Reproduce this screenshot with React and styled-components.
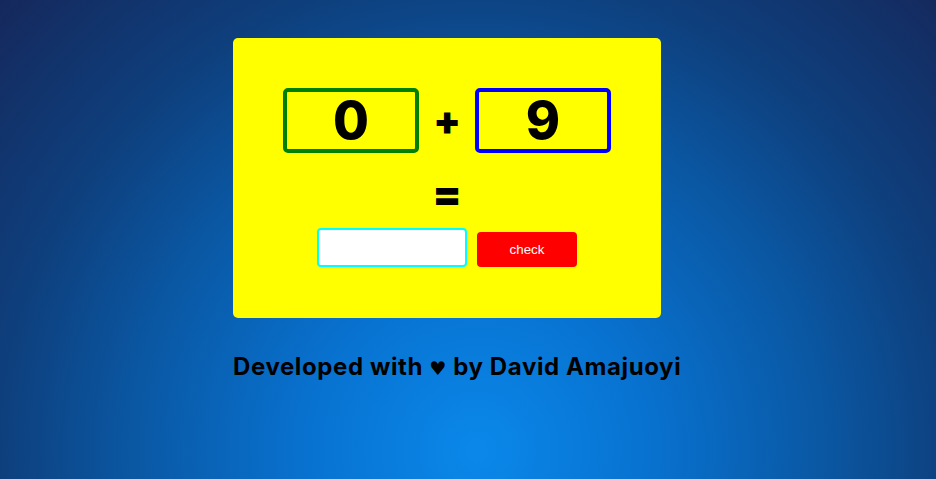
import React, { useState } from 'react'
import styled, { createGlobalStyle } from 'styled-components'

const GlobalStyle = createGlobalStyle`
    html, body {
        margin: 0;
        padding: 0;
        height: 100%;
    }
    body {
        min-height: 479px;
        font-family: 'Inter', 'Liberation Sans', sans-serif;
        background: radial-gradient(circle farthest-corner at 51% 94%, #0a88ea 0%, #0872d0 26%, #0a58a4 52%, #0e407e 72%, #15285c 100%);
        background-attachment: fixed;
    }
`

const Page = styled.div`
    width: 470px;
    margin: 0 auto;
    padding-top: 38px;
`

const Card = styled.div`
    width: 428px;
    box-sizing: border-box;
    background: #ffff00;
    border-radius: 5px;
    padding: 50px 0 51px;
    display: flex;
    flex-direction: column;
    align-items: center;
`

const Sum = styled.div`
    display: flex;
    align-items: center;
    gap: 18px;
`

const NumberBox = styled.div`
    width: 136px;
    height: 65px;
    box-sizing: border-box;
    border: 4px solid ${props => props.color};
    border-radius: 5px;
    display: flex;
    align-items: center;
    justify-content: center;
    font-family: 'Inter', 'Liberation Sans', sans-serif;
    font-weight: 800;
    font-size: 52px;
    line-height: 1;
    color: #000;
`

const Sign = styled.span`
    width: 20px;
    display: flex;
    justify-content: center;
    font-family: 'Inter', 'Liberation Sans', sans-serif;
    font-weight: 900;
    font-size: 40px;
    line-height: 1;
    color: #000;
`

const Equals = styled(Sign)`
    margin-top: 20px;
    font-size: 42px;
`

const AnswerRow = styled.div`
    display: flex;
    align-items: flex-end;
    gap: 10px;
    margin-top: 13px;
`

const AnswerInput = styled.input`
    width: 150px;
    height: 39px;
    box-sizing: border-box;
    border: 2px solid #00ffff;
    border-radius: 4px;
    background: #fff;
    outline: none;
    padding: 0 8px;
    font-size: 16px;
`

const CheckButton = styled.button`
    width: 100px;
    height: 35px;
    border: none;
    border-radius: 4px;
    background: #ff0000;
    color: #fff;
    font-family: 'Liberation Sans', Arial, sans-serif;
    font-size: 13.33px;
    cursor: pointer;
`

const Footer = styled.h2`
    margin: 34px 0 0;
    font-family: 'Inter', 'Liberation Sans', sans-serif;
    font-weight: 700;
    font-size: 24px;
    letter-spacing: 0.6px;
    color: #000;
    white-space: nowrap;
`

const Heart = styled.span`
    font-family: 'DejaVu Sans', sans-serif;
    font-size: 19px;
`

const App = () => {
    const [answer, setAnswer] = useState('')

    return (
        <>
            <GlobalStyle />
            <Page>
                <Card>
                    <Sum>
                        <NumberBox color="#008000">0</NumberBox>
                        <Sign>+</Sign>
                        <NumberBox color="#0000ff">9</NumberBox>
                    </Sum>
                    <Equals>=</Equals>
                    <AnswerRow>
                        <AnswerInput value={answer} onChange={e => setAnswer(e.target.value)} />
                        <CheckButton>check</CheckButton>
                    </AnswerRow>
                </Card>
                <Footer>Developed with <Heart>♥</Heart> by David Amajuoyi</Footer>
            </Page>
        </>
    )
}

export default App
